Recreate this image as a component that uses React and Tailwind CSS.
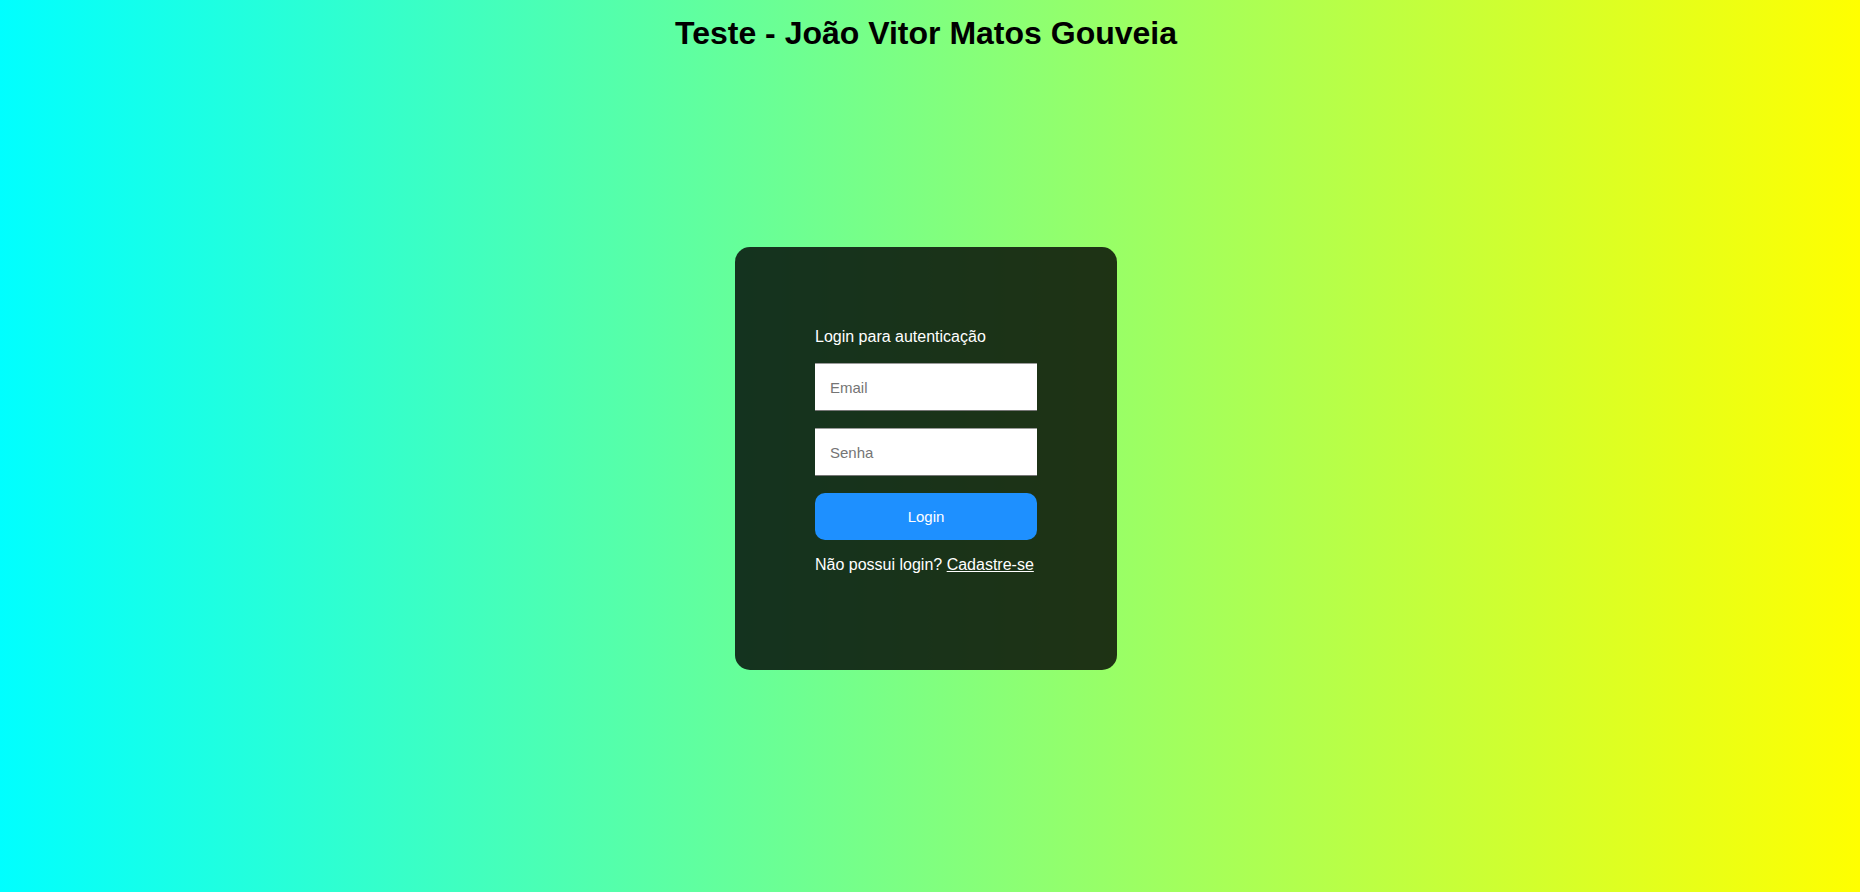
import React, { useState } from "react";

function App() {
	const [email, setEmail] = useState("");
	const [senha, setSenha] = useState("");

	return (
		<div className="min-h-screen w-full bg-[linear-gradient(to_right,#00ffff,#ffff00)] font-['Liberation_Sans',Arial,sans-serif] text-black">
			{/* Title */}
			<div className="pr-2">
				<h1 className="pt-[15px] text-center text-[32px] font-bold leading-[37px]">Teste - João Vitor Matos Gouveia</h1>
			</div>

			{/* Login card */}
			<div className="flex justify-center pr-2 pt-[195px]">
				<div className="rounded-[15px] bg-black/80 p-20 text-white">
					<p className="text-[16px] leading-[20px]">Login para autenticação</p>
					<form className="mt-[16px] flex w-[222px] flex-col" onSubmit={(e) => e.preventDefault()}>
						<input
							type="email"
							placeholder="Email"
							value={email}
							onChange={(e) => setEmail(e.target.value)}
							className="h-[48px] w-full border-t border-b border-t-[#9a9a9a] border-b-[#767676] bg-white px-[15px] text-[15px] text-black outline-none placeholder:text-[#757575]"
						/>
						<input
							type="password"
							placeholder="Senha"
							value={senha}
							onChange={(e) => setSenha(e.target.value)}
							className="mt-[17px] h-[48px] w-full border-t border-b border-t-[#9a9a9a] border-b-[#767676] bg-white px-[15px] text-[15px] text-black outline-none placeholder:text-[#757575]"
						/>
						<button type="submit" className="mt-[17px] h-[47px] w-full cursor-pointer rounded-[10px] bg-[#1e90ff] pt-[2px] text-[15px] text-white">
							Login
						</button>
					</form>
					<p className="mt-4 mb-4 text-[16px] leading-[18px]">
						Não possui login?{" "}
						<a href="#" className="underline">
							Cadastre-se
						</a>
					</p>
				</div>
			</div>
		</div>
	);
}

export default App;
